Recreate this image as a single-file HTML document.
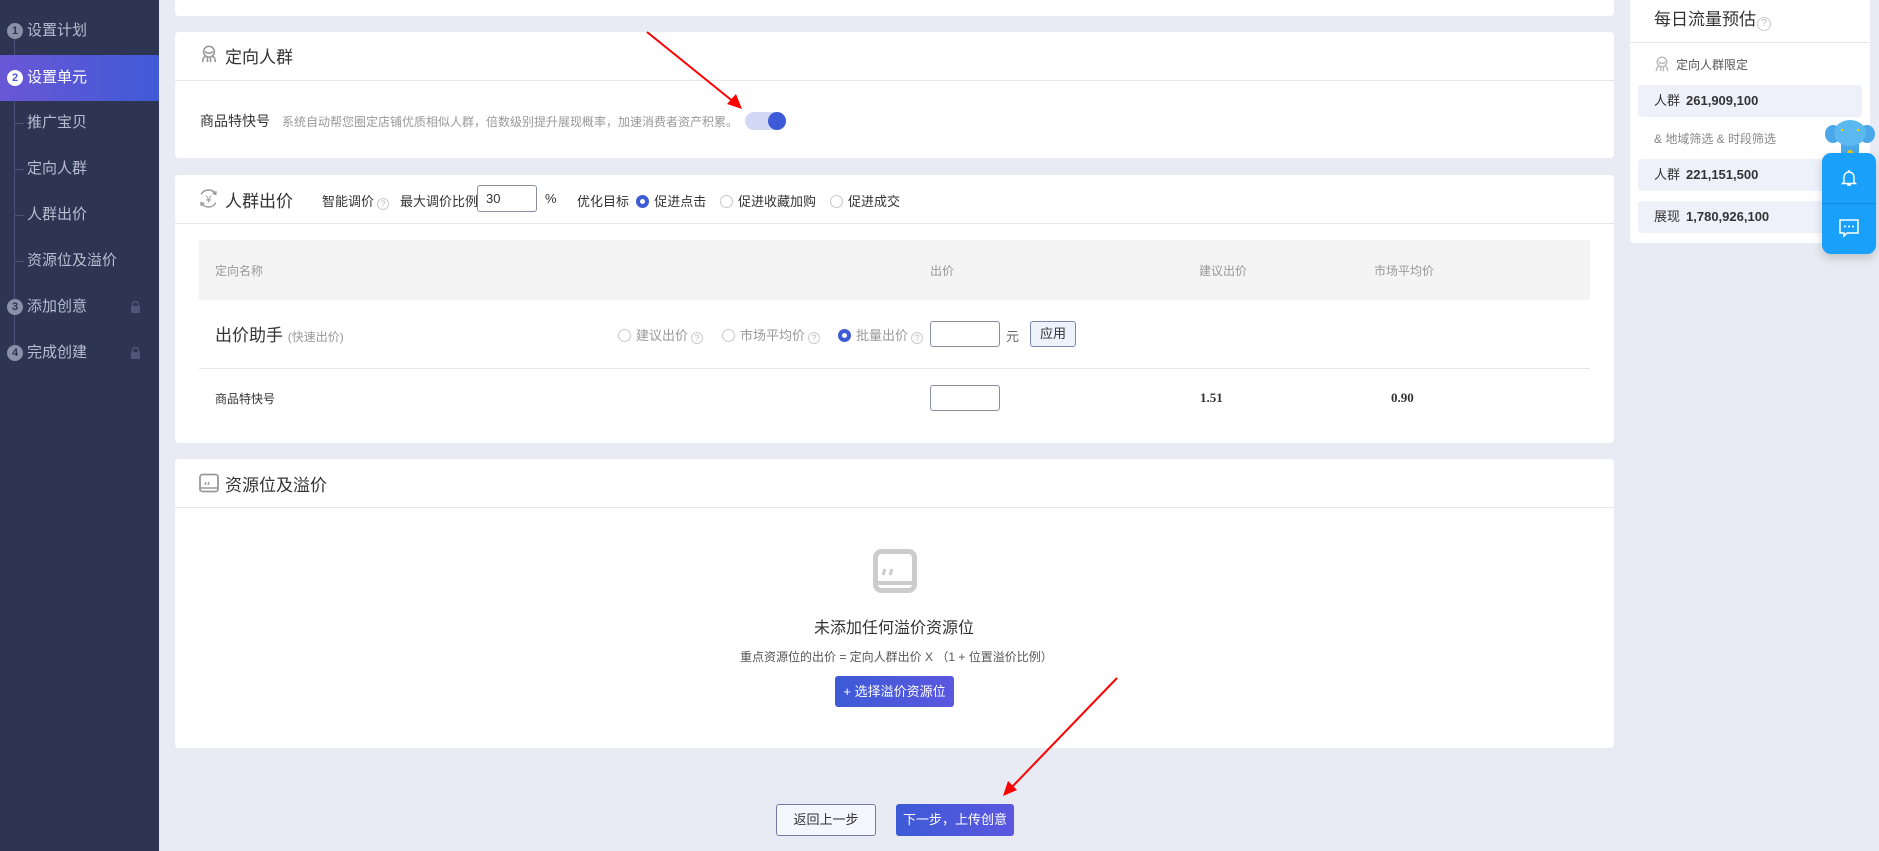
<!DOCTYPE html>
<html><head><meta charset="utf-8">
<style>
*{margin:0;padding:0;box-sizing:border-box}
body{width:1879px;height:851px;overflow:hidden;background:#e8ebf3;font-family:"Liberation Sans","Noto Sans CJK SC",sans-serif;color:#333;position:relative;font-size:13px}
.a{position:absolute;white-space:nowrap}
.side{position:absolute;left:0;top:0;width:159px;height:851px;background:#2e3553}
.side .vl{position:absolute;left:14px;top:30px;width:1px;height:330px;background:#4a5275}
.si{position:absolute;left:0;width:159px;height:46px;line-height:46px;color:#b8bdd0;font-size:15px;padding-left:27px}
.si .n{position:absolute;left:7px;top:15px;width:16px;height:16px;border-radius:50%;background:#8a90a8;color:#2e3553;font-size:11px;line-height:16px;text-align:center;font-weight:bold}
.si.act{background:linear-gradient(90deg,#6a57d6,#3f5ad6);color:#fff}
.si.act .n{background:#fff;color:#4a5ad6}
.si .tick{position:absolute;left:14px;top:23px;width:10px;height:1px;background:#4a5275}
.lock{position:absolute;left:130px;top:17px;width:11px;height:12px}
.card{position:absolute;left:175px;width:1439px;background:#fff;border-radius:4px}
.hl{position:absolute;left:0;width:100%;height:1px;background:#e6e6e6}
.title{font-size:17px;color:#333}
.radio{display:inline-block;width:13px;height:13px;border:1px solid #c8c8c8;border-radius:50%;vertical-align:-2px;margin-right:5px;background:#fff}
.radio.on{border:4px solid #3d5bd6}
.q{display:inline-block;width:12px;height:12px;border:1px solid #ccc;border-radius:50%;font-size:9px;line-height:10px;text-align:center;color:#bbb;vertical-align:-1px;margin-left:3px}
.inp{position:absolute;border:1px solid #8a8fa3;border-radius:3px;background:#fff}
.rp{position:absolute;left:1630px;top:0;width:240px;height:243px;background:#fff;border-radius:0 0 4px 4px}
.rrow{position:absolute;left:8px;width:224px;height:32px;background:#eef1fa;border-radius:4px;line-height:32px;padding-left:16px;color:#333;font-size:13px}
.rrow b{margin-left:6px;font-family:"Liberation Sans",sans-serif}
</style></head><body>

<div class="side">
  <div class="vl"></div>
  <div class="si" style="top:8px"><span class="n">1</span>设置计划</div>
  <div class="si act" style="top:55px"><span class="n">2</span>设置单元</div>
  <div class="si" style="top:100px"><span class="tick"></span>推广宝贝</div>
  <div class="si" style="top:146px"><span class="tick"></span>定向人群</div>
  <div class="si" style="top:192px"><span class="tick"></span>人群出价</div>
  <div class="si" style="top:238px"><span class="tick"></span>资源位及溢价</div>
  <div class="si" style="top:284px"><span class="n">3</span>添加创意<svg class="lock" viewBox="0 0 11 12"><path d="M2.5 5V3.5a3 3 0 0 1 6 0V5" stroke="#4f5677" stroke-width="1.5" fill="none"/><rect x="1" y="5" width="9" height="7" rx="1" fill="#4f5677"/></svg></div>
  <div class="si" style="top:330px"><span class="n">4</span>完成创建<svg class="lock" viewBox="0 0 11 12"><path d="M2.5 5V3.5a3 3 0 0 1 6 0V5" stroke="#4f5677" stroke-width="1.5" fill="none"/><rect x="1" y="5" width="9" height="7" rx="1" fill="#4f5677"/></svg></div>
</div>

<div class="card" style="top:-4px;height:20px"></div>

<!-- 定向人群 -->
<div class="card" style="top:32px;height:126px">
  <svg class="a" style="left:25px;top:13px" width="18" height="18" viewBox="0 0 20 20"><circle cx="10" cy="7.5" r="6" fill="none" stroke="#999" stroke-width="1.8"/><path d="M6 7c1 3 7 3 8 0M3 19c0-4 1-6 4-7M17 19c0-4-1-6-4-7M8.3 19v-5M11.7 19v-5" fill="none" stroke="#999" stroke-width="1.8"/></svg>
  <div class="a title" style="left:50px;top:11px">定向人群</div>
  <div class="hl" style="top:48px"></div>
  <div class="a" style="left:25px;top:79px;font-size:14px;color:#333">商品特快号<span style="font-size:12px;color:#999;margin-left:12px">系统自动帮您圈定店铺优质相似人群，倍数级别提升展现概率，加速消费者资产积累。</span></div>
  <div class="a" style="left:570px;top:80px;width:41px;height:18px;border-radius:9px;background:#d3d9f5"></div>
  <div class="a" style="left:593px;top:80px;width:18px;height:18px;border-radius:50%;background:#3d5bd6"></div>
</div>

<!-- 人群出价 -->
<div class="card" style="top:175px;height:268px">
  <svg class="a" style="left:23px;top:13px" width="21" height="21" viewBox="0 0 20 20"><path d="M3 6a8 8 0 0 1 14 0M17 14a8 8 0 0 1-14 0" fill="none" stroke="#999" stroke-width="1.4"/><path d="M14 5l3 1 0-3M6 15l-3-1 0 3" fill="none" stroke="#999" stroke-width="1.4"/><text x="10" y="14" font-size="10" text-anchor="middle" fill="#999" font-family="Liberation Sans">¥</text></svg>
  <div class="a title" style="left:50px;top:12px">人群出价</div>
  <div class="a" style="left:147px;top:16px;color:#333">智能调价<span class="q">?</span></div>
  <div class="a" style="left:225px;top:16px;color:#333">最大调价比例</div>
  <div class="inp" style="left:302px;top:10px;width:60px;height:27px;padding:5px 8px;font-size:13px">30</div>
  <div class="a" style="left:370px;top:16px;color:#333">%</div>
  <div class="a" style="left:402px;top:16px;color:#333">优化目标 &nbsp;<span class="radio on"></span>促进点击</div>
  <div class="a" style="left:545px;top:16px;color:#333"><span class="radio"></span>促进收藏加购</div>
  <div class="a" style="left:655px;top:16px;color:#333"><span class="radio"></span>促进成交</div>
  <div class="hl" style="top:48px"></div>
  <div class="a" style="left:24px;top:65px;width:1391px;height:60px;background:#f4f4f5"></div>
  <div class="a" style="left:40px;top:87px;color:#999;font-size:12px">定向名称</div>
  <div class="a" style="left:755px;top:87px;color:#999;font-size:12px">出价</div>
  <div class="a" style="left:1024px;top:87px;color:#999;font-size:12px">建议出价</div>
  <div class="a" style="left:1199px;top:87px;color:#999;font-size:12px">市场平均价</div>
  <div class="a" style="left:40px;top:146px;font-size:17px;color:#333">出价助手 <span style="font-size:12px;color:#999">(快速出价)</span></div>
  <div class="a" style="left:443px;top:150px;color:#999"><span class="radio"></span>建议出价<span class="q">?</span></div>
  <div class="a" style="left:547px;top:150px;color:#999"><span class="radio"></span>市场平均价<span class="q">?</span></div>
  <div class="a" style="left:663px;top:150px;color:#999"><span class="radio on"></span>批量出价<span class="q">?</span></div>
  <div class="inp" style="left:755px;top:146px;width:70px;height:26px"></div>
  <div class="a" style="left:831px;top:151px;color:#666">元</div>
  <div class="a" style="left:855px;top:146px;width:46px;height:26px;border:1px solid #7b88b5;border-radius:3px;background:#eef2fb;text-align:center;line-height:24px;font-size:13px">应用</div>
  <div class="a" style="left:24px;top:193px;width:1391px;height:1px;background:#e6e6e6"></div>
  <div class="a" style="left:40px;top:215px;font-size:12px">商品特快号</div>
  <div class="inp" style="left:755px;top:210px;width:70px;height:26px"></div>
  <div class="a" style="left:1025px;top:215px;font-weight:bold;font-size:13px;font-family:'Liberation Serif',serif">1.51</div>
  <div class="a" style="left:1216px;top:215px;font-weight:bold;font-size:13px;font-family:'Liberation Serif',serif">0.90</div>
</div>

<!-- 资源位及溢价 -->
<div class="card" style="top:459px;height:289px">
  <svg class="a" style="left:24px;top:14px" width="20" height="20" viewBox="0 0 20 20"><rect x="1" y="1.5" width="18" height="17" rx="2.5" fill="none" stroke="#999" stroke-width="1.8"/><path d="M1 15h18M6 12l1-3M9 12l1-3" stroke="#999" stroke-width="1.4" fill="none"/></svg>
  <div class="a title" style="left:50px;top:12px">资源位及溢价</div>
  <div class="hl" style="top:48px"></div>
  <svg class="a" style="left:698px;top:90px" width="44" height="44" viewBox="0 0 44 44"><rect x="2.5" y="2.5" width="39" height="39" rx="6" fill="none" stroke="#ccc" stroke-width="5"/><path d="M2 34h40" stroke="#ccc" stroke-width="4"/><path d="M10 26l2-6M17 26l2-6" stroke="#ccc" stroke-width="3"/></svg>
  <div class="a" style="left:639px;top:155px;font-size:16px;color:#333">未添加任何溢价资源位</div>
  <div class="a" style="left:565px;top:189px;font-size:12px;color:#555">重点资源位的出价 = 定向人群出价 X （1 + 位置溢价比例）</div>
  <div class="a" style="left:660px;top:217px;width:119px;height:31px;border-radius:3px;background:linear-gradient(90deg,#3d5bd6,#5b57e0);color:#fff;text-align:center;line-height:31px;font-size:13px">+ 选择溢价资源位</div>
</div>

<div class="a" style="left:776px;top:804px;width:100px;height:32px;border:1px solid #6f7ca8;border-radius:3px;background:#f3f6fd;text-align:center;line-height:30px;font-size:13px">返回上一步</div>
<div class="a" style="left:896px;top:804px;width:118px;height:32px;border-radius:3px;background:linear-gradient(90deg,#3d5bd6,#5b57e0);color:#fff;text-align:center;line-height:32px;font-size:13px">下一步，上传创意</div>

<div class="rp">
  <div class="a" style="left:24px;top:5px;font-size:17px;color:#333">每日流量预估<span class="q" style="width:14px;height:14px;line-height:12px;font-size:10px;margin-left:1px">?</span></div>
  <div class="hl" style="top:42px;background:#e6e6e6"></div>
  <svg class="a" style="left:24px;top:56px" width="16" height="16" viewBox="0 0 20 20"><circle cx="10" cy="7.5" r="6" fill="none" stroke="#bbb" stroke-width="1.8"/><path d="M6 7c1 3 7 3 8 0M3 19c0-4 1-6 4-7M17 19c0-4-1-6-4-7M8.3 19v-5M11.7 19v-5" fill="none" stroke="#bbb" stroke-width="1.8"/></svg>
  <div class="a" style="left:46px;top:56px;font-size:12px;color:#555">定向人群限定</div>
  <div class="rrow" style="top:85px">人群<b>261,909,100</b></div>
  <div class="a" style="left:24px;top:130px;font-size:12px;color:#888">&amp; 地域筛选 &amp; 时段筛选</div>
  <div class="rrow" style="top:159px">人群<b>221,151,500</b></div>
  <div class="rrow" style="top:201px">展现<b>1,780,926,100</b></div>
</div>

<svg class="a" style="left:1825px;top:118px" width="50" height="40" viewBox="0 0 50 40"><rect x="16" y="24" width="18" height="16" fill="#4aa8e8"/><ellipse cx="8" cy="16" rx="8" ry="9" fill="#4aa8e8"/><ellipse cx="42" cy="16" rx="8" ry="9" fill="#4aa8e8"/><ellipse cx="25" cy="15" rx="16" ry="13" fill="#5bb8f0"/><circle cx="25" cy="35" r="3" fill="#f2c811"/><circle cx="17" cy="12" r="1.2" fill="#f2d511"/><circle cx="33" cy="12" r="1.2" fill="#f2d511"/></svg>
<div class="a" style="left:1822px;top:153px;width:54px;height:101px;border-radius:9px;background:#18a0fb;box-shadow:0 4px 10px rgba(0,0,0,.18)"></div>
<div class="a" style="left:1822px;top:203px;width:54px;height:1px;background:#1288d8"></div>
<svg class="a" style="left:1839px;top:168px" width="20" height="20" viewBox="0 0 20 20"><path d="M5 14V9a5 5 0 0 1 10 0v5l1.5 1.5h-13z M10 2v2 M8 17h4" fill="none" stroke="#fff" stroke-width="1.4"/></svg>
<svg class="a" style="left:1838px;top:218px" width="22" height="20" viewBox="0 0 22 20"><path d="M2 2h18v13H9l-3 3v-3H2z" fill="none" stroke="#fff" stroke-width="1.5"/><circle cx="7" cy="8.5" r="1" fill="#fff"/><circle cx="11" cy="8.5" r="1" fill="#fff"/><circle cx="15" cy="8.5" r="1" fill="#fff"/></svg>

<svg class="a" style="left:0;top:0" width="1879" height="851" viewBox="0 0 1879 851">
  <line x1="647" y1="32" x2="735" y2="103" stroke="#f00" stroke-width="2"/>
  <polygon points="742,109 727,104 736,94" fill="#f00"/>
  <line x1="1117" y1="678" x2="1010" y2="789" stroke="#f00" stroke-width="2"/>
  <polygon points="1003,796 1008,781 1017,790" fill="#f00"/>
</svg>
</body></html>
